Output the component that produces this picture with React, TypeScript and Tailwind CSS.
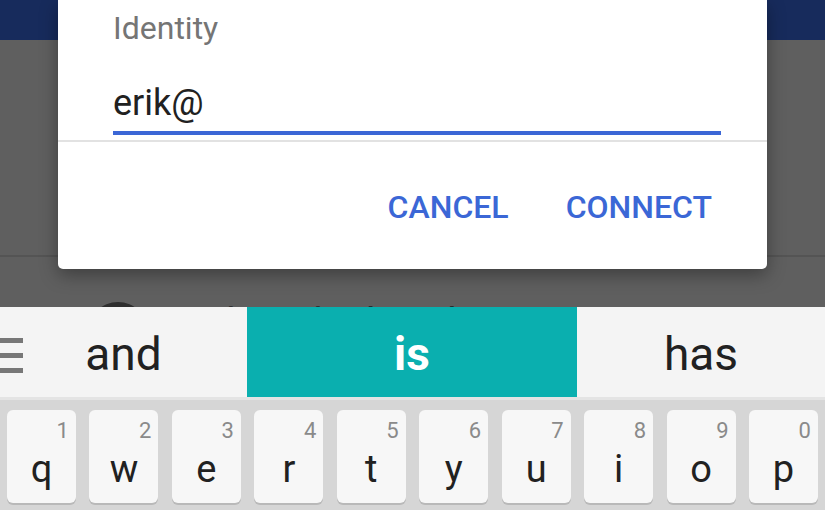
const keys = [
  { l: 'q', n: '1' },
  { l: 'w', n: '2' },
  { l: 'e', n: '3' },
  { l: 'r', n: '4' },
  { l: 't', n: '5' },
  { l: 'y', n: '6' },
  { l: 'u', n: '7' },
  { l: 'i', n: '8' },
  { l: 'o', n: '9' },
  { l: 'p', n: '0' },
]

function Key({ l, n }: { l: string; n: string }) {
  return (
    <div className="h-[93px] rounded-[6px] bg-[#f7f7f7] shadow-[0_2px_0_#b9b9b9] flex flex-col">
      <div className="mt-[10px] pr-[7px] text-right text-[22px] leading-none text-[#8a8a8a]">{n}</div>
      <div className="mt-[8px] text-center text-[38px] leading-none text-[#212121]">{l}</div>
    </div>
  )
}

export default function App() {
  return (
    <div className="w-[825px] h-[510px] overflow-hidden flex flex-col font-['Roboto',sans-serif]">
      {/* app behind the dimmed overlay */}
      <div className="relative h-[307px] overflow-hidden bg-[#5f5f5f]">
        <div className="h-[40px] bg-[#172b5c]" />
        <div className="h-[215px]" />
        <div className="h-[2px] bg-[#545454]" />
        <div className="flex items-start gap-[52px] pl-[88px] pt-[45px]">
          <div className="w-[60px] h-[60px] rounded-full bg-[#2e2e2e]" />
          <div className="mt-[2px] text-[40px] leading-none text-[#1c1c1c]">Alex Alsobrook 2</div>
        </div>

        {/* dialog */}
        <div className="absolute left-[58px] top-0 w-[709px] h-[269px] bg-white rounded-b-[5px] shadow-[0_6px_18px_rgba(0,0,0,0.35)] flex flex-col">
          <div className="px-[55px]">
            <div className="mt-[12px] text-[32px] leading-none text-[#757575]">Identity</div>
            <div className="mt-[41px] text-[36px] leading-none text-[#212121]">erik@</div>
            <div className="mt-[10px] h-[4px] w-[608px] bg-[#3b67d6]" />
          </div>
          <div className="mt-[5px] h-[2px] bg-[#e2e2e2]" />
          <div className="mt-[49px] flex justify-end gap-[57px] pr-[55px] text-[32px] leading-none font-medium text-[#3b67d6]">
            <span>CANCEL</span>
            <span>CONNECT</span>
          </div>
        </div>
      </div>

      {/* suggestion strip */}
      <div className="h-[90px] bg-[#f4f4f4] flex text-[46px] leading-none text-[#212121]">
        <div className="relative w-[247px] flex items-center justify-center pt-[4px]">
          <div className="absolute left-0 top-[31px] flex flex-col gap-[10px]">
            <div className="h-[5px] w-[23px] bg-[#777777]" />
            <div className="h-[5px] w-[23px] bg-[#777777]" />
            <div className="h-[5px] w-[23px] bg-[#777777]" />
          </div>
          <span>and</span>
        </div>
        <div className="w-[330px] bg-[#0aafaf] flex items-center justify-center pt-[4px] font-bold text-white">is</div>
        <div className="flex-1 flex items-center justify-center pt-[4px]">has</div>
      </div>
      <div className="h-[3px] bg-[#e4e4e4]" />

      {/* keyboard */}
      <div className="flex-1 bg-[#d6d6d6] pt-[10px] px-[7px] grid grid-cols-10 gap-x-[13.5px] content-start">
        {keys.map((k) => (
          <Key key={k.l} l={k.l} n={k.n} />
        ))}
      </div>
    </div>
  )
}
